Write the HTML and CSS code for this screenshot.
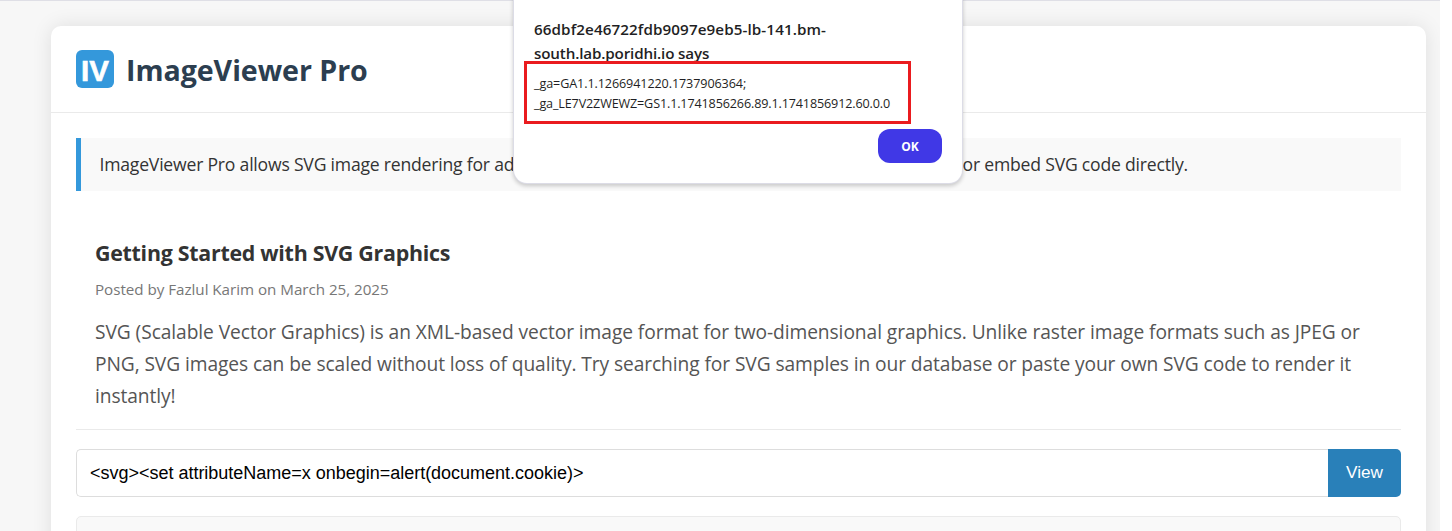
FILE: index.html
```html
<!DOCTYPE html>
<html lang="en">
<head>
<meta charset="utf-8">
<title>ImageViewer Pro</title>
<link rel="stylesheet" href="styles.css">
</head>
<body>
<div class="viewport">
  <main class="card">
    <header class="header">
      <div class="logo">IV</div>
      <h1 class="brand">ImageViewer Pro</h1>
    </header>
    <div class="content">
      <div class="notice">
        <span>ImageViewer Pro allows SVG image rendering for advanced users.</span>
        <span>or embed SVG code directly.</span>
      </div>
      <article class="post">
        <h2 class="post-title">Getting Started with SVG Graphics</h2>
        <div class="post-meta">Posted by Fazlul Karim on March 25, 2025</div>
        <p class="post-body">SVG (Scalable Vector Graphics) is an XML-based vector image format for two-dimensional graphics. Unlike raster image formats such as JPEG or<br><span class="tight">PNG, SVG images can be scaled without loss of quality. Try searching for SVG samples in our database or paste your own SVG code to render it<br>instantly!</span></p>
      </article>
      <div class="search">
        <div class="field">&lt;svg&gt;&lt;set attributeName=x onbegin=alert(document.cookie)&gt;</div>
        <button class="view">View</button>
      </div>
      <div class="result"></div>
    </div>
  </main>
</div>
<div class="dialog">
  <div class="dialog-title"><span class="host">66dbf2e46722fdb9097e9eb5-lb-141.bm-</span><br><span class="says">south.lab.poridhi.io says</span></div>
  <div class="dialog-message"><span class="ga">_ga=GA1.1.1266941220.1737906364;</span><br>_ga_LE7V2ZWEWZ=GS1.1.1741856266.89.1.1741856912.60.0.0</div>
  <button class="ok">OK</button>
  <div class="marker"></div>
</div>
</body>
</html>
```
FILE: styles.css
```css
* { box-sizing: border-box; }
body {
  margin: 0;
  background: #fff;
  font-family: "Open Sans", "Noto Sans", sans-serif;
  overflow: hidden;
}
.viewport {
  width: 1440px;
  height: 531px;
  padding: 25px 14px 0 51px;
  border-top: 1px solid #dfdfe6;
  background: #f7f7f7;
  overflow: hidden;
}
.card {
  height: 600px;
  background: #fff;
  border-radius: 10px;
  box-shadow: 0 0 20px rgba(0, 0, 0, .1);
}
.header {
  display: flex;
  align-items: center;
  gap: 12px;
  height: 87px;
  padding: 0 25px;
  border-bottom: 1px solid #eaeaea;
}
.logo {
  width: 38px;
  height: 38px;
  border-radius: 6px;
  background: #3498db;
  color: #fff;
  font: bold 29.5px/41px "Liberation Sans", sans-serif;
  -webkit-text-stroke: .6px #fff;
  text-align: center;
}
.brand {
  margin: 0;
  padding-top: 2px;
  color: #2c3e50;
  font-size: 28.6px;
  line-height: 38px;
  font-weight: 700;
  letter-spacing: -.05px;
}
.content { padding: 25px 25px 0; }
.notice {
  display: flex;
  justify-content: space-between;
  height: 53px;
  padding: 0 213px 0 18.5px;
  border-left: 5px solid #3498db;
  background: #f9f9f9;
  color: #333;
  font-size: 17.6px;
  line-height: 53px;
  letter-spacing: -.21px;
  white-space: nowrap;
}
.post {
  height: 239px;
  padding: 46px 19px 0;
  border-bottom: 1px solid #eaeaea;
}
.post-title {
  margin: 0;
  color: #333;
  font-size: 21.4px;
  line-height: 32px;
  letter-spacing: -.27px;
}
.post-meta {
  margin-top: 8px;
  color: #777;
  font-size: 15.2px;
  line-height: 24px;
  letter-spacing: -.03px;
}
.post-body {
  margin: 15px 0 0;
  color: #555;
  font-size: 19.2px;
  line-height: 32px;
  letter-spacing: -.075px;
  white-space: nowrap;
}
.tight { letter-spacing: -.09px; }
.search { display: flex; margin-top: 19px; height: 48px; }
.field {
  flex: 1;
  padding-left: 13px;
  border: 1px solid #ddd;
  border-right: 0;
  border-radius: 5px 0 0 5px;
  color: #000;
  font: 18px/47px "Liberation Sans", Arial, sans-serif;
  letter-spacing: -.015px;
}
.view {
  width: 73px;
  padding: 0 0 2px;
  border: 0;
  border-radius: 0 5px 5px 0;
  background: #2980b9;
  color: #fff;
  font: 17.2px "Liberation Sans", Arial, sans-serif;
}
.result {
  height: 80px;
  margin-top: 19px;
  border: 1px solid #eaeaea;
  border-radius: 5px;
  background: #f9f9f9;
}
/* Browser alert floating over the page */
.dialog {
  position: absolute;
  top: -12px;
  left: 514px;
  width: 448px;
  height: 195px;
  padding: 29px 20px 0;
  border-radius: 13px;
  background: #fff;
  box-shadow: 0 0 0 1px #dcdce6, 0 2px 4px 1px rgba(0, 0, 0, .2);
  color: #1f1f24;
  white-space: nowrap;
}
.dialog-title { font-size: 15.2px; line-height: 24px; font-weight: 600; }
.host { letter-spacing: .1px; }
.says { letter-spacing: -.15px; }
.dialog-message {
  margin-top: 9px;
  font-size: 12.6px;
  line-height: 20px;
  letter-spacing: -.14px;
}
.ga { letter-spacing: -.1px; }
.ok {
  display: block;
  width: 64px;
  height: 34px;
  margin: 15px 0 0 auto;
  padding: 0;
  border: 0;
  border-radius: 12px;
  background: #4038e6;
  color: #fff;
  font: 700 12px "Open Sans", sans-serif;
}
.marker {
  position: absolute;
  top: 73px;
  left: 10px;
  width: 387px;
  height: 63px;
  border: 3px solid #ea1b1f;
}
```
